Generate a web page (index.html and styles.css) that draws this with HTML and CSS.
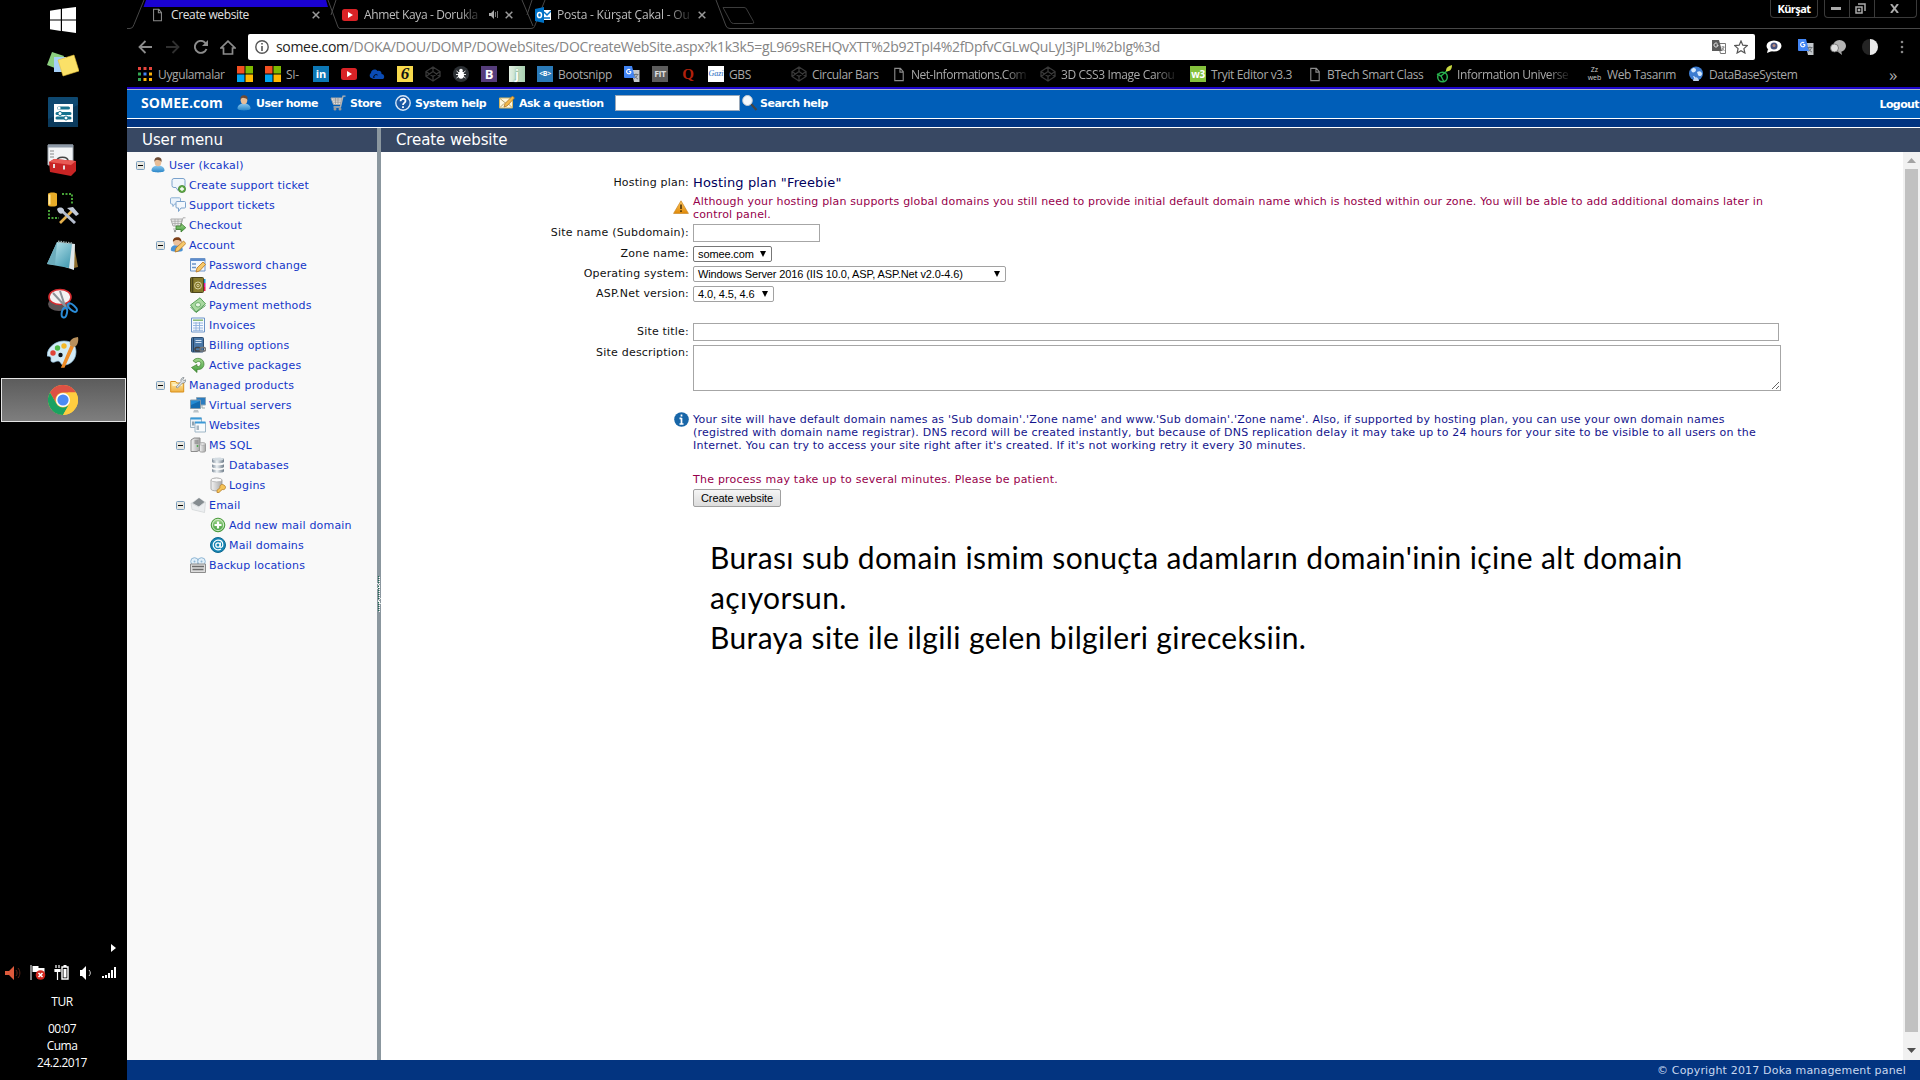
FILE: index.html
```
<!DOCTYPE html>
<html lang="tr">
<head>
<meta charset="utf-8">
<title>Create website</title>
<link rel="stylesheet" href="styles.css">
</head>
<body>
<svg class="defs" width="0" height="0">
  <defs>
    <linearGradient id="g-blue" x2="0" y2="1"><stop stop-color="#8cc8ee"/><stop offset="1" stop-color="#2a86c8"/></linearGradient>
    <linearGradient id="g-green" x2="0" y2="1"><stop stop-color="#a4d890"/><stop offset="1" stop-color="#3e9a38"/></linearGradient>
    <linearGradient id="g-grey" x2="1" y2="0"><stop stop-color="#f4f4f4"/><stop offset="1" stop-color="#a8a8a8"/></linearGradient>
    <linearGradient id="g-steel" x2="1" y2="0"><stop stop-color="#7d8b98"/><stop offset=".4" stop-color="#eef3f6"/><stop offset="1" stop-color="#6d7b88"/></linearGradient>
    <linearGradient id="g-gold" x2="0" y2="1"><stop stop-color="#fff0b0"/><stop offset="1" stop-color="#f0b040"/></linearGradient>
    <linearGradient id="g-pad" x2="1" y2="1"><stop stop-color="#c8eef4"/><stop offset="1" stop-color="#3a94ac"/></linearGradient>
    <linearGradient id="g-warn" x2="0" y2="1"><stop stop-color="#ffc860"/><stop offset="1" stop-color="#e08a08"/></linearGradient>
  </defs>
  <symbol id="page" viewBox="0 0 12 16"><path d="M1.500 1.500h6l3 3.500v9.500h-9zM7 1.500v4h3.500" fill="none" stroke="#8a8a8a" stroke-width="1.200"/></symbol>
  <symbol id="close" viewBox="0 0 8 8"><path d="M.7.700l6.600 6.600M7.300.700L.7 7.300" stroke="#9a9a9a" stroke-width="1.500"/></symbol>
  <symbol id="youtube" viewBox="0 0 16 16"><rect y="2" width="16" height="12" rx="2.500" fill="#d92226"/><path d="M6 5l5 3-5 3z" fill="#fff"/></symbol>
  <symbol id="microsoft" viewBox="0 0 16 16"><path fill="#f25022" d="M0 0h7.500v7.500H0z"/><path fill="#7fba00" d="M8.500 0H16v7.500H8.500z"/><path fill="#00a4ef" d="M0 8.500h7.500V16H0z"/><path fill="#ffb900" d="M8.500 8.500H16V16H8.500z"/></symbol>
  <symbol id="codepen" viewBox="0 0 16 16"><path d="M8 1l7 4.500v5L8 15l-7-4.500v-5zM8 1v4.500M8 15v-4.500M1 5.500l7 5 7-5M1 10.500l7-5 7 5" fill="none" stroke="#383838" stroke-width="1.300"/></symbol>
  <symbol id="translate" viewBox="0 0 16 16"><path d="M7 4h8.500v12H10z" fill="#c4c8cc"/><path d="M0 0h8l3 12H1a1 1 0 0 1-1-1z" fill="#4285f4"/><path d="M7 5.500H5.200M7 5.500a2.200 2.200 0 1 1-.8-1.600" fill="none" stroke="#fff" stroke-width="1.100"/><path d="M9.500 8.500h5M12 7.500v1M13.500 8.500c-.5 2-2 3.500-3 4M10.500 9c.5 2 2 3.500 3.500 4" fill="none" stroke="#6a7076" stroke-width=".9"/></symbol>
  <symbol id="user" viewBox="0 0 16 16"><path d="M1.500 13.500c0-3.500 3-5 6.500-5s6.500 1.500 6.500 5c0 2.500-13 2.500-13 0z" fill="url(#g-blue)"/><ellipse cx="8" cy="5.300" rx="3.300" ry="4" fill="#e8bd96"/><path d="M4.500 5C4 1.500 6 .2 8 .2s4.200 1 3.500 4.800C10.500 3 8 3 7 2.800 6 3 5 3.500 4.500 5z" fill="#6b4a34"/></symbol>
  <symbol id="cart" viewBox="0 0 16 16"><path d="M1 3h11l-1.500 6.500h-7z" fill="#dedede" stroke="#a6a6a6"/><path d="M3 5h8.500M3.500 7.200H11M5.500 3v6M8 3v6" stroke="#8e8e8e" stroke-width=".7"/><path d="M15.500 1.200H13L10.500 12H3.500" fill="none" stroke="#b4b4b4" stroke-width="1.300"/><circle cx="5" cy="14" r="1.500" fill="#9a9a9a"/><circle cx="10" cy="14" r="1.500" fill="#9a9a9a"/></symbol>
  <symbol id="help" viewBox="0 0 16 16"><circle cx="8" cy="8" r="7.200" fill="#1b59a4" stroke="#d8e8f8" stroke-width="1.400"/><path d="M5.500 6.200C5.500 3 10.600 3 10.500 6c0 1.900-2.500 1.900-2.500 4M8 11.200v1.800" fill="none" stroke="#fff" stroke-width="1.800"/></symbol>
  <symbol id="mailpen" viewBox="0 0 16 16"><path d="M.5 3h13v10H.5z" fill="#fdf6dc" stroke="#d4b660"/><path d="M1 3.500l6 5 6-5M1 12.500l4-4M13 12.500l-4-4" fill="none" stroke="#b8a468"/><path d="M5 12l1-3.500L13.500 1l2 2L8 11z" fill="#f2b94a" stroke="#a86c18" stroke-width=".7"/></symbol>
  <symbol id="lens" viewBox="0 0 16 16"><path d="M9 9l5.500 6" stroke="#454545" stroke-width="2.200"/><ellipse cx="5.500" cy="5.500" rx="4.800" ry="5" fill="#f4f8fc" stroke="#c8ccd0"/></symbol>
  <symbol id="minus" viewBox="0 0 9 9"><rect x=".5" y=".5" width="8" height="8" rx="1" fill="#e6e6e0" stroke="#7b9ebd"/><path d="M2 4.500h5" stroke="#000"/></symbol>
  <symbol id="bubbleadd" viewBox="0 0 16 16"><path d="M4 1.500h9a2 2 0 0 1 2 2v5a2 2 0 0 1-2 2H9l-1 3-2-3H4a2 2 0 0 1-2-2v-5a2 2 0 0 1 2-2z" fill="#f0f6fc" stroke="#7ba2cc"/><circle cx="12" cy="12" r="3.600" fill="#62ac48" stroke="#3c7c2c" stroke-width=".7"/><path d="M10 12h4M12 10v4" stroke="#fff" stroke-width="1.300"/></symbol>
  <symbol id="bubbles" viewBox="0 0 16 16"><path d="M1.500.8h8a1 1 0 0 1 1 1V6a1 1 0 0 1-1 1H4.500L3 9.500 2.500 7h-1a1 1 0 0 1-1-1V1.800a1 1 0 0 1 1-1z" fill="#eaf2fa" stroke="#8bafd4"/><path d="M7 4.500h7.500a1 1 0 0 1 1 1V10a1 1 0 0 1-1 1H11l-2.500 3.500V11H7a1 1 0 0 1-1-1V5.500a1 1 0 0 1 1-1z" fill="#f4f8fc" stroke="#7ba2cc"/></symbol>
  <symbol id="checkout" viewBox="0 0 16 16"><path d="M.8 2h11.500l-2 7H3z" fill="#ececec" stroke="#aaa"/><path d="M2 4.300h10M2.500 6.500h8.500M5 2v7M8 2v7" stroke="#a4a4a4" stroke-width=".7"/><path d="M15.500.8H13L10 12H3" fill="none" stroke="#b0b0b0"/><circle cx="5" cy="14" r="1.200" fill="#999"/><path d="M6 9h5V6.500l4.800 4.200L11 15v-2.500H6z" fill="url(#g-green)" stroke="#3a7c2c" stroke-width=".8"/></symbol>
  <symbol id="account" viewBox="0 0 16 16"><path d="M.8 13c0-4 3-5 6-5s6 1.500 6 5c0 2.500-12 2.500-12 0z" fill="#4b93d6"/><circle cx="7" cy="5" r="3.800" fill="#ecc09a"/><path d="M3 5C2.500 1.500 5 .2 7.500.2S12 2 11.500 6c-1-3-3-2.800-4.500-3C5.500 3 4 3.500 3 5z" fill="#7c3f18"/><path d="M5 15l1-4 7.500-7L15.800 6.500 8.500 14z" fill="#f6c868" stroke="#b87420" stroke-width=".8"/></symbol>
  <symbol id="formpen" viewBox="0 0 16 16"><path d="M.5 1.500h14.500v12.500H.5z" fill="#f2f7fd" stroke="#6c94c8"/><path d="M1 3h14" stroke="#5d8ccc" stroke-width="2"/><path d="M2 7h4M2 10.500h4" stroke="#6c94c8" stroke-width="1.500"/><path d="M6 15l1-4 6-6 2.500 2.500L9.500 14z" fill="#f6c868" stroke="#b87420" stroke-width=".8"/></symbol>
  <symbol id="addressbook" viewBox="0 0 16 16"><path d="M13 2h2.500v4H13z" fill="#1b98d8"/><path d="M13 6h2.500v4H13z" fill="#e01ca0"/><path d="M13 10h2.500v4H13z" fill="#e8184c"/><rect x=".5" y=".5" width="13" height="15" rx="1" fill="#877b2c" stroke="#4d461c"/><path d="M2.500 1v14" stroke="#4d461c" stroke-width="1.600"/><circle cx="8" cy="8.500" r="3.500" fill="none" stroke="#d8d0a0"/><circle cx="8" cy="8.500" r="1.200" fill="none" stroke="#d8d0a0"/></symbol>
  <symbol id="money" viewBox="0 0 16 16"><path d="M.5 8L10 .8l5.500 6L6 15z" fill="#a9d8a0" stroke="#59a258"/><path d="M.5 10L6 15.500 15.500 8.500" fill="none" stroke="#4c944c"/><ellipse cx="8" cy="7.800" rx="2.600" ry="2.200" fill="#e8f6e4" stroke="#59a258" stroke-width=".8"/></symbol>
  <symbol id="invoice" viewBox="0 0 16 16"><path d="M1.500 1h13v14h-13z" fill="#f6faff" stroke="#6c94c8"/><path d="M3 3.200h10" stroke="#84b874" stroke-width="1.500"/><path d="M3 6h10M3 8.500h10M3 11h10M3 13.300h10M6 5v9M9.500 5v9" stroke="#8fb0dc" stroke-width=".9"/></symbol>
  <symbol id="billing" viewBox="0 0 16 16"><rect x="1.500" y=".5" width="12" height="14.500" rx="1" fill="#4a78a8" stroke="#2c4c70"/><path d="M3.500 1v14" stroke="#264566"/><path d="M5.500 3.500h6M5.500 5.500h6" stroke="#cfe0f2" stroke-width="1.200"/><rect x="5" y="10.500" width="5.500" height="3.600" rx="1.800" fill="none" stroke="#444" stroke-width="1.500"/><rect x="10" y="10.500" width="5.500" height="3.600" rx="1.800" fill="none" stroke="#777" stroke-width="1.500"/></symbol>
  <symbol id="recycle" viewBox="0 0 16 16"><path d="M3 3.800C6-.5 14 1 14 7c0 4-3.500 6-7 5.500V15.500L1.500 10.500 7 7.500v2c2 .4 3.800-.8 3.800-2.800C10.800 4.200 7.500 3.500 6 6z" fill="url(#g-green)" stroke="#3c7c2c" stroke-width=".7"/></symbol>
  <symbol id="folder" viewBox="0 0 16 16"><path d="M.7 4.500h5l1 1.500h7v9H.7z" fill="url(#g-gold)" stroke="#d8901c"/><path d="M2.500 8h9.500" stroke="#fff8dc" stroke-width="1.500"/><path d="M6 10l5-5.500c-.6-2 .8-4.300 3-4L12.800 2.500l1 1.200 2-.9c.3 2-1.400 3.700-3.300 3.200L7.500 11z" fill="#dfe3e6" stroke="#83898e" stroke-width=".8"/></symbol>
  <symbol id="servers" viewBox="0 0 16 16"><path d="M6.500.5h9v7.500h-9z" fill="#2a7cc0" stroke="#8da6b8"/><path d="M12 8v3h3" stroke="#9aa" fill="none"/><path d="M.5 3h10v8.500H.5z" fill="#258cd4" stroke="#8398a8"/><path d="M1 8l9-4v7H1z" fill="#136bb0"/><path d="M4 13h4l1 2.500H3z" fill="#bcc4c8"/></symbol>
  <symbol id="windows" viewBox="0 0 16 16"><path d="M.5 1h11v9.500H.5z" fill="#eef4f8" stroke="#9fb6c6"/><path d="M.5 1.500h11" stroke="#3b9ad8" stroke-width="2"/><path d="M2 4.500h2.500v4H2z" fill="#90a4b2"/><path d="M5 5.500h10.500V15H5z" fill="#f8fbfd" stroke="#9fb6c6"/><path d="M5 5.500h10.500" stroke="#3b9ad8" stroke-width="2"/><path d="M6.500 8.500H9V13H6.500z" fill="#a8b8c4"/></symbol>
  <symbol id="mssql" viewBox="0 0 16 16"><path d="M1 3l3-2h6v12l-3 1.500H1z" fill="url(#g-grey)" stroke="#8c8c8c"/><path d="M4.500 4h4M4.500 6h4" stroke="#777"/><circle cx="7.500" cy="9" r=".9" fill="#48a848"/><path d="M9.500 7c0-1.500 6-1.500 6 0v7c0 1.500-6 1.500-6 0z" fill="url(#g-grey)" stroke="#8c8c8c" stroke-width=".8"/><ellipse cx="12.500" cy="7" rx="3" ry="1.100" fill="#f4f4f4" stroke="#999" stroke-width=".6"/></symbol>
  <symbol id="database" viewBox="0 0 16 16"><path d="M2 2.200c0-2 12-2 12 0v2.500c0 2-12 2-12 0zM2 7.200c2 1.500 10 1.500 12 0v2.500c0 2-12 2-12 0zM2 12c2 1.500 10 1.500 12 0v2.300c0 2-12 2-12 0z" fill="url(#g-steel)"/><ellipse cx="8" cy="2.200" rx="5.500" ry="1.400" fill="#d4dce2"/></symbol>
  <symbol id="dbkey" viewBox="0 0 16 16"><path d="M1 3c0-2.500 11-2.500 11 0v9c0 2.500-11 2.500-11 0z" fill="url(#g-grey)" stroke="#9a9a9a" stroke-width=".8"/><ellipse cx="6.500" cy="3" rx="5.500" ry="1.900" fill="#fafafa" stroke="#aaa" stroke-width=".7"/><path d="M7 15.500v-2.200l3-2.500c-.5-2 .8-3.600 2.500-3.300 2 .3 3.300 2 3 3.300-.5 1.700-2 2.200-3.300 1.700L9 15.500z" fill="#f6c458" stroke="#b8802c" stroke-width=".8"/></symbol>
  <symbol id="email" viewBox="0 0 16 16"><path d="M1 6l8-5.500L15.500 5l-1 10.500L2 12.500z" fill="#dfe2e4"/><path d="M2.500 6L9 1l5.500 4L9 9.500z" fill="#858c90"/><path d="M1 6l7.500 4L15.500 5l-1 10.500L2 12.500z" fill="#eceef0" stroke="#cfd2d4" stroke-width=".6"/></symbol>
  <symbol id="add" viewBox="0 0 16 16"><circle cx="8" cy="8" r="6.800" fill="url(#g-green)" stroke="#4a9a3c"/><circle cx="8" cy="8" r="5.600" fill="none" stroke="#d8f0d0" stroke-width=".9"/><path d="M4.500 8h7M8 4.500v7" stroke="#fff" stroke-width="2.200"/></symbol>
  <symbol id="at" viewBox="0 0 16 16"><circle cx="8" cy="8" r="7.500" fill="#1886b4" stroke="#0e6890"/><circle cx="8" cy="8" r="2.200" fill="none" stroke="#fff" stroke-width="1.300"/><path d="M10.500 5.500L10 9.500c.3 1.500 2.800 1 2.800-1.700C12.800 5 10.700 3.200 8 3.200A4.800 4.800 0 0 0 8 12.800c1.300 0 2.200-.3 3-.8" fill="none" stroke="#fff" stroke-width="1.200"/></symbol>
  <symbol id="backup" viewBox="0 0 16 16"><circle cx="4.500" cy="4.500" r="3.800" fill="#e2f0fa" stroke="#8fb6d4"/><circle cx="11.500" cy="4.500" r="3.800" fill="#e2f0fa" stroke="#8fb6d4"/><circle cx="4.500" cy="4.500" r="1" fill="#8fb6d4"/><circle cx="11.500" cy="4.500" r="1" fill="#8fb6d4"/><path d="M.5 7h15v8.500H.5z" fill="#dcdcdc" stroke="#8c8c8c"/><path d="M2 9.500h12M2.500 12.500h11" stroke="#6c6c6c" stroke-width="1.300"/></symbol>
</svg>

<div class="desktop">
  <aside class="taskbar">
    <div class="pin start"><svg width="26" height="26" viewBox="0 0 26 26"><path d="M0 3.800L10.800 2v10.500H0zM12 1.800L26 0v12.500H12zM0 13.500h10.800V24L0 22.200zM12 13.500h14V26l-14-2z" fill="#fff"/></svg></div>
    <div class="pin"><svg width="32" height="32" viewBox="0 0 32 32"><path d="M5 4l12 4-4 14L0 17z" fill="#8ccf80"/><path d="M7 9h12v15H7z" fill="#a6d0f8"/><path d="M11 12l16-5 5 16-16 5z" fill="#fbe168" stroke="#e4bf38" stroke-width=".6"/></svg></div>
    <div class="pin"><svg width="30" height="30" viewBox="0 0 30 30"><rect width="30" height="30" rx="1" fill="#0e4870"/><path d="M0 22L30 8v22H0z" fill="#0b3a5c"/><path d="M6 7h19v18H6z" fill="#fff"/><path d="M10.500 11h10M9 16.500h13M9 21h13" stroke="#17728e" stroke-width="3" stroke-linecap="round"/><circle cx="11" cy="11" r="1.600" fill="#fff"/><circle cx="12" cy="16.500" r="2" fill="#fff" stroke="#17728e"/><circle cx="18" cy="21" r="2" fill="#fff" stroke="#17728e"/></svg></div>
    <div class="pin"><svg width="32" height="32" viewBox="0 0 32 32"><path d="M1 1h25v20H1z" fill="#f2f4f6" stroke="#a0a8b0"/><path d="M1 2h25" stroke="#8c98a6" stroke-width="3"/><path d="M3 7h4M3 10h4M3 13h4" stroke="#888"/><path d="M10 17c0-5 11-5 11 0" fill="none" stroke="#444" stroke-width="1.600"/><path d="M2 18l5-3 22 2v10l-5 5L3 28z" fill="#c82424"/><path d="M2 18l5-3 22 2-5 4z" fill="#e85a54"/><path d="M7 20v4M17 21.500v4" stroke="#e8e0e0" stroke-width="2"/></svg></div>
    <div class="pin"><svg width="32" height="32" viewBox="0 0 32 32"><path d="M1 2c0-2 9-2 9 0v11c0 2-9 2-9 0z" fill="#e8ac28"/><path d="M2.500 2.500v10" stroke="#ffe9a0" stroke-width="2"/><path d="M15 2h10v10M2 18v8h10" fill="none" stroke="#48a438" stroke-width="2" stroke-dasharray="2 1.500"/><path d="M13 31l13-13" stroke="#e4b04c" stroke-width="2.600"/><path d="M14 18l14 13" stroke="#b4bccc" stroke-width="3"/><path d="M10 17c3-3 8-1 7 3-2 3-6 2-7-3zM20 16l6-1 6 7-3 2-4-4z" fill="#c2cad8"/></svg></div>
    <div class="pin"><svg width="32" height="32" viewBox="0 0 32 32"><path d="M27 5l4 22-4 1z" fill="#8c6c2c"/><path d="M12 2l16 2-1 26-9-3z" fill="#dfe7ea"/><path d="M10 2l15 2-3 24L0 24z" fill="url(#g-pad)"/><path d="M10 2L0 24l8 1z" fill="#6cacbc"/><path d="M11 1.500l15 2" stroke="#9aa" stroke-width="2" stroke-dasharray="1.500 1"/></svg></div>
    <div class="pin"><svg width="32" height="32" viewBox="0 0 32 32"><ellipse cx="12" cy="16" rx="11" ry="7" fill="#5c5456"/><ellipse cx="13" cy="9" rx="11" ry="7.500" fill="#f4f2f2" stroke="#d62c30" stroke-width="1.600"/><path d="M6 5l13 14M13 3l5 15" stroke="#8c9298" stroke-width="2"/><ellipse cx="17.500" cy="24.500" rx="2.600" ry="5" fill="none" stroke="#2a8cd8" stroke-width="2" transform="rotate(12 17 24)"/><ellipse cx="25.500" cy="20" rx="2.600" ry="5.500" fill="none" stroke="#2a8cd8" stroke-width="2" transform="rotate(-48 25 20)"/></svg></div>
    <div class="pin"><svg width="32" height="32" viewBox="0 0 32 32"><path d="M0 20C0 11 9 5 17 5s12 4 12 11-5 13-12 13c-4 0-3-4-6-4s-3 2-6 1 2-6-5-6z" fill="#d2eaf6" stroke="#8cbcd8" stroke-width=".7"/><circle cx="6" cy="17" r="2.700" fill="#e04438"/><circle cx="10.500" cy="12" r="2.700" fill="#4cb848"/><circle cx="17" cy="10" r="2.700" fill="#f4b828"/><circle cx="13.500" cy="19" r="2.200" fill="#0a1018"/><path d="M15 31l9-21 2 1-9 20z" fill="#ee8c28" stroke="#ee8c28" stroke-width="1.500"/><path d="M23 9c-1-4 1-7 8-8 1 5-1 10-5 10z" fill="#b8905c"/></svg></div>
    <div class="pin active"><svg width="30" height="30" viewBox="0 0 30 30"><circle cx="15" cy="15" r="15" fill="#ffcd40"/><path d="M2 7.500A15 15 0 0 1 28 7.500H15a7.500 7.500 0 0 0-6.500 11.300z" fill="#dd5144"/><path d="M2 7.500L8.500 18.800A7.500 7.500 0 0 0 21.500 18.800L15 30A15 15 0 0 1 2 7.500z" fill="#1ba261"/><path d="M21.500 18.800A7.500 7.500 0 0 0 21 10.500l-1-3h8A15 15 0 0 1 15 30z" fill="#ffcd40"/><circle cx="15" cy="15" r="7" fill="#fff"/><circle cx="15" cy="15" r="5.600" fill="#4c8bf5"/></svg></div>
    <div class="tray">
      <svg class="more" width="5" height="8" viewBox="0 0 5 8"><path d="M0 0l5 4-5 4z" fill="#fff"/></svg>
      <div class="tray-icons">
        <svg width="16" height="14" viewBox="0 0 16 14"><path d="M0 5h4l5-5v14L4 9H0z" fill="#dc5a3c"/><path d="M11 4c1.500 2 1.500 4 0 6M13 2c2.500 3 2.500 7 0 10" fill="none" stroke="#5c2416"/></svg>
        <svg width="16" height="15" viewBox="0 0 16 15"><path d="M1 0v15" stroke="#fff"/><path d="M2.500 1h6v2h6v6h-6V7h-6z" fill="#fff"/><circle cx="10.500" cy="10" r="4.800" fill="#d42a20"/><path d="M8.500 8l4 4M12.500 8l-4 4" stroke="#fff" stroke-width="1.600"/></svg>
        <svg width="15" height="15" viewBox="0 0 15 15"><path d="M2 0v3M5 0v3M1 4.500h5v2H1zM3.500 6v9" stroke="#fff" fill="#fff" stroke-width="1.200"/><path d="M8 2h6v12H8zM9.500.700h3" fill="none" stroke="#fff" stroke-width="1.400"/><path d="M9.500 4h3v8.500h-3z" fill="#fff"/></svg>
        <svg width="13" height="14" viewBox="0 0 13 14"><path d="M0 4h2v6H0zM2 4l4-4v14l-4-4z" fill="#fff"/><path d="M9 4c1.800 2 1.800 4 0 6" fill="none" stroke="#ccc"/></svg>
        <svg width="14" height="11" viewBox="0 0 14 11"><path d="M0 9h2v2H0zM3 8h2v3H3zM6 6h2v5H6zM9 3h2v8H9zM12 0h2v11h-2z" fill="#fff"/></svg>
      </div>
      <div class="lang">TUR</div>
      <div class="clock"><span>00:07</span><span>Cuma</span><span>24.2.2017</span></div>
    </div>
  </aside>

  <div class="browser">
    <div class="tabstrip">
      <svg class="tab-outline" width="1793" height="29" viewBox="0 0 1793 29">
        <path d="M19 0h180l2 7H16.500z" fill="#1a02d2"/>
        <path d="M0 28.500h3q3 0 4-4L17 0M201 0l10 27q.7 1.500 2 1.500h191q3 0 3.500-2L418 0M395 0l11 26M589 0l10 26q1 2.500 4 2.500H1793M204 15l5-15M400 15l5-15" fill="none" stroke="#474747"/>
        <path d="M596 7.500h21q2 0 2.500 1.500l7 12.500q1 2-1 2h-19q-2 0-3-2z" fill="none" stroke="#3c3c3c"/>
      </svg>
      <div class="tab tab-1"><svg width="11" height="14"><use href="#page"/></svg><span>Create website</span><svg width="8" height="8"><use href="#close"/></svg></div>
      <div class="tab tab-2"><svg width="16" height="16"><use href="#youtube"/></svg><span>Ahmet Kaya - Dorukla</span><svg class="sound" width="10" height="9" viewBox="0 0 10 9"><path d="M0 3h2l3-3v9L2 6H0z" fill="#aaa"/><path d="M6.500 2v5M8.500 1v7" stroke="#777"/></svg><svg width="8" height="8"><use href="#close"/></svg></div>
      <div class="tab tab-3"><svg width="16" height="16" viewBox="0 0 16 16"><path d="M8 3h8v10H8z" fill="#fff"/><path d="M9 5l3 3 4-4M9 11h6" stroke="#0072c6" fill="none" stroke-width="1.500"/><path d="M0 2l9-2v16l-9-2z" fill="#0072c6"/><ellipse cx="4.500" cy="8" rx="2" ry="2.600" fill="none" stroke="#fff" stroke-width="1.500"/></svg><span>Posta - Kürşat Çakal - Ou</span><svg width="8" height="8"><use href="#close"/></svg></div>
      <div class="profile">Kürşat</div>
      <div class="winctl">
        <i><svg width="10" height="3"><path fill="#aaa" d="M0 0h10v3H0z"/></svg></i>
        <i><svg width="11" height="11" viewBox="0 0 11 11"><path d="M3 1h7v7M1 4h6v6H1zM3.500 6.500h1v1h-1z" fill="none" stroke="#aaa" stroke-width="1.500"/></svg></i>
        <i class="wide"><svg width="9" height="9" viewBox="0 0 9 9"><path d="M1 0l7 9M8 0L1 9" stroke="#aaa" stroke-width="2"/></svg></i>
      </div>
    </div>

    <div class="toolbar">
      <svg width="14" height="14" viewBox="0 0 14 14"><path d="M14 7H2M7.500 1L1.500 7l6 6" fill="none" stroke="#8c8c8c" stroke-width="1.800"/></svg>
      <svg width="14" height="14" viewBox="0 0 14 14"><path d="M0 7h12M6.500 1l6 6-6 6" fill="none" stroke="#303030" stroke-width="1.800"/></svg>
      <svg width="14" height="14" viewBox="0 0 14 14"><path d="M12.500 9A6 6 0 1 1 11.300 2.800L12.500 4" fill="none" stroke="#8c8c8c" stroke-width="1.900"/><path d="M14 0v6H8z" fill="#8c8c8c"/></svg>
      <svg width="16" height="15" viewBox="0 0 16 15"><path d="M8 1.200L1 8h2.500v6h9V8H15z" fill="none" stroke="#8c8c8c" stroke-width="1.700"/></svg>
      <div class="omnibox">
        <svg width="14" height="14" viewBox="0 0 14 14"><circle cx="7" cy="7" r="6.200" fill="none" stroke="#555" stroke-width="1.400"/><path d="M7 3v1.600M7 6v5" stroke="#555" stroke-width="1.600"/></svg>
        <span class="url"><b>somee.com</b>/DOKA/DOU/DOMP/DOWebSites/DOCreateWebSite.aspx?k1k3k5=gL969sREHQvXTT%2b92TpI4%2fDpfvCGLwQuLyJ3jPLI%2bIg%3d</span>
        <svg width="14" height="14" viewBox="0 0 14 14"><path d="M6 3.500h7.500v10H8.500z" fill="#fff" stroke="#777"/><path d="M0 0h7l3 11H0z" fill="#5a5a5a"/><path d="M6 5H4.500M6 5a2 2 0 1 1-.6-1.400" fill="none" stroke="#fff" stroke-width=".9"/><path d="M9.500 7h3M11 6v1M12 7l-2 4M10 8l2.500 3" stroke="#777" fill="none" stroke-width=".8"/></svg>
        <svg width="14" height="14" viewBox="0 0 14 14"><path d="M7 1l1.800 4.200 4.400.4-3.300 3 1 4.400L7 10.700 3.100 13l1-4.400-3.300-3 4.400-.4z" fill="none" stroke="#555" stroke-width="1.200"/></svg>
      </div>
      <div class="extensions">
        <svg width="16" height="16" viewBox="0 0 16 16"><ellipse cx="8" cy="7" rx="7.500" ry="5.500" fill="#fff"/><path d="M2 10l-1 4 5-2z" fill="#fff"/><circle cx="8" cy="7" r="3.500" fill="#44507c"/><circle cx="8" cy="6.500" r="1.500" fill="#b8887c"/></svg>
        <svg width="16" height="16"><use href="#translate"/></svg>
        <svg width="16" height="16" viewBox="0 0 16 16"><ellipse cx="9.500" cy="7" rx="6.500" ry="6" fill="#b4b4b4"/><path d="M8 13l3-2 1 5z" fill="#a4a4a4"/><circle cx="4.500" cy="9" r="4" fill="#dedede" stroke="#666" stroke-width=".8"/></svg>
        <svg width="16" height="16" viewBox="0 0 16 16"><path d="M8 0a8 8 0 0 1 0 16z" fill="#eaeaea"/><path d="M8 0a8 8 0 0 0 0 16z" fill="#242424"/></svg>
      </div>
      <svg class="dots" width="4" height="14" viewBox="0 0 4 14"><circle cx="2" cy="2" r="1.300" fill="#888"/><circle cx="2" cy="7" r="1.300" fill="#888"/><circle cx="2" cy="12" r="1.300" fill="#888"/></svg>
    </div>

    <div class="bookmarks">
      <a><svg width="14" height="14" viewBox="0 0 14 14"><path d="M0 0h3v3H0zM5.500 0h3v3h-3zM11 0h3v3h-3z" fill="#e8453c"/><path d="M0 5.500h3v3H0z" fill="#34a853"/><path d="M5.500 5.500h3v3h-3z" fill="#4285f4"/><path d="M11 5.500h3v3h-3zM5.500 11h3v3h-3zM11 11h3v3h-3z" fill="#fbb30b"/><path d="M0 11h3v3H0z" fill="#34a853"/></svg><span>Uygulamalar</span></a>
      <a><svg width="16" height="16"><use href="#microsoft"/></svg></a>
      <a><svg width="16" height="16"><use href="#microsoft"/></svg><span>SI-</span></a>
      <a><i class="fav linkedin">in</i></a>
      <a><svg width="16" height="16"><use href="#youtube"/></svg></a>
      <a><svg width="16" height="16" viewBox="0 0 16 16"><path d="M2 12a3 3 0 0 1 0-5C2 4 6 2 8.500 5 11 4 13 6 12.500 8 16 8 16 13 13 13H6c-1.500 0-3-.5-4-1z" fill="#0a4bb4"/><path d="M5 12c-1-3 2-4 3.500-3" fill="none" stroke="#000"/></svg></a>
      <a><i class="fav six">6</i></a>
      <a><svg width="16" height="16"><use href="#codepen"/></svg></a>
      <a><svg width="16" height="16" viewBox="0 0 16 16"><circle cx="8" cy="8" r="8" fill="#2c3034"/><ellipse cx="8" cy="9" rx="3" ry="3.800" fill="#fff"/><circle cx="8" cy="4.500" r="1.800" fill="#fff"/><path d="M3.500 5l9 7M12.500 5l-9 7M3 8.500h10" stroke="#fff" stroke-width=".9"/></svg></a>
      <a><i class="fav boot">B</i></a>
      <a><i class="fav jay">j</i></a>
      <a><i class="fav snipp">&lt;B&gt;</i><span>Bootsnipp</span></a>
      <a><svg width="16" height="16"><use href="#translate"/></svg></a>
      <a><i class="fav fit">FIT</i></a>
      <a><i class="fav quora">Q</i></a>
      <a><i class="fav gazi">Gazi</i><span>GBS</span></a>
      <a><svg width="16" height="16"><use href="#codepen"/></svg><span>Circular Bars</span></a>
      <a><svg width="12" height="15"><use href="#page"/></svg><span class="fade tight">Net-Informations.Com</span></a>
      <a><svg width="16" height="16"><use href="#codepen"/></svg><span class="fade">3D CSS3 Image Carou</span></a>
      <a><i class="fav w3">w3</i><span>Tryit Editor v3.3</span></a>
      <a><svg width="12" height="15"><use href="#page"/></svg><span>BTech Smart Class</span></a>
      <a><svg width="16" height="18" viewBox="0 0 16 18"><circle cx="6.500" cy="12" r="4.800" fill="none" stroke="#28b04c" stroke-width="1.500"/><path d="M1 9l4 2 3 6M5 11l7-6" stroke="#28b04c" fill="none" stroke-width="1.400"/><path d="M10 6c0-4 3-5 6-6 0 4-2 7-6 6z" fill="#c8d840"/></svg><span class="fade">Information Universe</span></a>
      <a><i class="fav zz"><span>Zz</span><span>web</span></i><span>Web Tasarım</span></a>
      <a><svg width="16" height="16" viewBox="0 0 16 16"><circle cx="8" cy="7.500" r="7" fill="#3c7cd0"/><path d="M3 4c2-3 5-2 5 0s-3 3-4 2zM9 6c3-2 5 0 5 2s-3 3-4 1zM5 10c2 0 3 2 2 4" fill="#d4e8fc"/><path d="M5 15c1-5 5-5 6 0z" fill="#bcd4f0"/></svg><span>DataBaseSystem</span></a>
      <a><span class="chev">»</span></a>
    </div>

    <main class="site">
      <header class="topbar">
        <a class="brand">SOMEE.com</a>
        <a class="t-home"><svg width="16" height="16"><use href="#user"/></svg>User home</a>
        <a class="t-store"><svg width="16" height="16"><use href="#cart"/></svg>Store</a>
        <a class="t-help"><svg width="16" height="16"><use href="#help"/></svg>System help</a>
        <a class="t-ask"><svg width="16" height="16"><use href="#mailpen"/></svg>Ask a question</a>
        <input class="search" type="text">
        <a class="t-search"><svg width="16" height="16"><use href="#lens"/></svg>Search help</a>
        <a class="logout">Logout</a>
      </header>
      <div class="band"></div>
      <div class="columns">
        <nav class="side">
          <h2>User menu</h2>
          <ul class="tree">
            <li class="l1"><svg class="tg"><use href="#minus"/></svg><svg class="ic"><use href="#user"/></svg><a>User (kcakal)</a></li>
            <li class="l2"><svg class="ic"><use href="#bubbleadd"/></svg><a>Create support ticket</a></li>
            <li class="l2"><svg class="ic"><use href="#bubbles"/></svg><a>Support tickets</a></li>
            <li class="l2"><svg class="ic"><use href="#checkout"/></svg><a>Checkout</a></li>
            <li class="l2"><svg class="tg"><use href="#minus"/></svg><svg class="ic"><use href="#account"/></svg><a>Account</a></li>
            <li class="l3"><svg class="ic"><use href="#formpen"/></svg><a>Password change</a></li>
            <li class="l3"><svg class="ic"><use href="#addressbook"/></svg><a>Addresses</a></li>
            <li class="l3"><svg class="ic"><use href="#money"/></svg><a>Payment methods</a></li>
            <li class="l3"><svg class="ic"><use href="#invoice"/></svg><a>Invoices</a></li>
            <li class="l3"><svg class="ic"><use href="#billing"/></svg><a>Billing options</a></li>
            <li class="l3"><svg class="ic"><use href="#recycle"/></svg><a>Active packages</a></li>
            <li class="l2"><svg class="tg"><use href="#minus"/></svg><svg class="ic"><use href="#folder"/></svg><a>Managed products</a></li>
            <li class="l3"><svg class="ic"><use href="#servers"/></svg><a>Virtual servers</a></li>
            <li class="l3"><svg class="ic"><use href="#windows"/></svg><a>Websites</a></li>
            <li class="l3"><svg class="tg"><use href="#minus"/></svg><svg class="ic"><use href="#mssql"/></svg><a>MS SQL</a></li>
            <li class="l4"><svg class="ic"><use href="#database"/></svg><a>Databases</a></li>
            <li class="l4"><svg class="ic"><use href="#dbkey"/></svg><a>Logins</a></li>
            <li class="l3"><svg class="tg"><use href="#minus"/></svg><svg class="ic"><use href="#email"/></svg><a>Email</a></li>
            <li class="l4"><svg class="ic"><use href="#add"/></svg><a>Add new mail domain</a></li>
            <li class="l4"><svg class="ic"><use href="#at"/></svg><a>Mail domains</a></li>
            <li class="l3"><svg class="ic"><use href="#backup"/></svg><a>Backup locations</a></li>
          </ul>
        </nav>
        <div class="splitter"><svg width="4" height="36" viewBox="0 0 4 36"><path d="M1.500 0v36" stroke="#1c6b50" stroke-width="1" stroke-dasharray="1 1"/><path d="M2.500 1v36" stroke="#fff" stroke-width="1" stroke-dasharray="1 1"/><path d="M0 7l3 3-3 3M4 22l-3 3 3 3" fill="none" stroke="#e8efec"/></svg></div>
        <section class="content">
          <h2>Create website</h2>
          <div class="pane">
            <form class="form">
              <label>Hosting plan:</label><div class="plan">Hosting plan "Freebie"</div>
              <svg class="note-icon warn" width="16" height="14" viewBox="0 0 16 14"><path d="M8 .8L15.400 13.400H.6z" fill="url(#g-warn)" stroke="#c88420" stroke-width=".7"/><path d="M8 4.500v4.500M8 10.300v1.800" stroke="#4c3408" stroke-width="1.600"/></svg>
              <p class="warning">Although your hosting plan supports global domains you still need to provide initial default domain name which is hosted within our zone. You will be able to add additional domains later in<br>control panel.</p>
              <label class="r-name">Site name (Subdomain):</label><input class="r-name sub" type="text">
              <label class="r-sel">Zone name:</label><div class="r-sel select zone"><span>somee.com</span><i></i></div>
              <label class="r-sel">Operating system:</label><div class="r-sel select os"><span>Windows Server 2016 (IIS 10.0, ASP, ASP.Net v2.0-4.6)</span><i></i></div>
              <label class="r-sel">ASP.Net version:</label><div class="r-sel select net"><span>4.0, 4.5, 4.6</span><i></i></div>
              <label class="r-title">Site title:</label><input class="r-title titlebox" type="text">
              <label class="r-desc">Site description:</label><textarea class="r-desc"></textarea>
              <svg class="note-icon info" width="15" height="15" viewBox="0 0 15 15"><circle cx="7.500" cy="7.500" r="7.300" fill="#1866a8"/><path d="M7.500 2.500v2M7.500 6v6M5.500 6.300h2M5.500 12h4" stroke="#fff" stroke-width="1.700"/></svg>
              <p class="infotext">Your site will have default domain names as 'Sub domain'.'Zone name' and www.'Sub domain'.'Zone name'. Also, if supported by hosting plan, you can use your own domain names<br>(registred with domain name registrar). DNS record will be created instantly, but because of DNS replication delay it may take up to 24 hours for your site to be visible to all users on the<br>Internet. You can try to access your site right after it's created. If it's not working retry it every 30 minutes.</p>
              <p class="patience">The process may take up to several minutes. Please be patient.</p>
              <button class="create" type="button">Create website</button>
              <p class="memo">Burası sub domain ismim sonuçta adamların domain'inin içine alt domain<br>açıyorsun.<br>Buraya site ile ilgili gelen bilgileri gireceksiin.</p>
            </form>
            <div class="scroll"><svg width="9" height="5"><path d="M0 5l4.500-5L9 5z" fill="#a3a3a3"/></svg><div class="thumb"></div><svg width="9" height="5"><path d="M0 0h9L4.500 5z" fill="#505050"/></svg></div>
          </div>
        </section>
      </div>
      <footer>© Copyright 2017 Doka management panel</footer>
    </main>
  </div>
</div>
</body>
</html>
```
FILE: styles.css
```
* { box-sizing: border-box; }
body { margin: 0; background: #000; font: 11px/13px "DejaVu Sans", Verdana, sans-serif; overflow: hidden; }
h2, p, ul { margin: 0; padding: 0; font-weight: normal; }
i { font-style: normal; }
svg { display: block; flex: none; }
.defs { position: absolute; }

.desktop { display: flex; width: 1920px; height: 1080px; }

/* taskbar */
.taskbar { width: 127px; height: 1080px; display: flex; flex-direction: column; background: #000; color: #fff; }
.pin { height: 48px; flex: none; display: flex; align-items: center; justify-content: center; padding-right: 1px; }
.pin.start { height: 40px; }
.pin.active { width: 125px; height: 44px; margin: 2px 0 0 1px; border: 1px solid #e4e4e4; background: linear-gradient(#5c5c5c, #7e7e7e); }
.tray { margin-top: auto; height: 136px; display: flex; flex-direction: column; font: 12px/17px "Open Sans", sans-serif; letter-spacing: -.5px; text-align: center; }
.more { margin-left: 111px; }
.tray-icons { display: flex; align-items: center; gap: 9px; padding-left: 5px; margin-top: 13px; height: 15px; }
.tray-icons svg:nth-child(3) { margin-left: -1px; }
.tray-icons svg:nth-child(4) { margin-left: 2px; }
.tray-icons svg:nth-child(5) { margin-left: 0; }
.lang { margin: 13px 3px 0 0; }
.clock { display: flex; flex-direction: column; margin: 10px 3px 0 0; }

/* browser chrome */
.browser { flex: 1; display: flex; flex-direction: column; min-width: 0; font-family: "Open Sans", sans-serif; }
.tabstrip { position: relative; height: 29px; display: flex; font-size: 12px; line-height: 17px; letter-spacing: -.37px; color: #bdbdbd; }
.tab-outline { position: absolute; left: 0; top: 0; }
.tab { position: relative; display: flex; align-items: center; height: 29px; flex: none; }
.tab span { white-space: nowrap; flex: 1; }
.tab svg + span { margin-left: 6px; }
.tab-1 { width: 168px; margin-left: 25px; color: #e0e0e0; }
.tab-1 svg + span { margin-left: 8px; }
.tab-2 { width: 171px; margin-left: 22px; }
.tab-2 span { max-width: 117px; }
.tab-2 .sound { margin: 0 6px 0 9px; }
.tab-3 { width: 171px; margin-left: 22px; }
.tab-3 span { letter-spacing: -.2px; max-width: 134px; margin-right: 7px; }
.tab-2 span, .tab-3 span, .fade { -webkit-mask-image: linear-gradient(90deg, #000 82%, rgba(0,0,0,.15)); mask-image: linear-gradient(90deg, #000 82%, rgba(0,0,0,.15)); }
.profile { margin-left: auto; width: 48px; height: 18px; border: 1px solid #3a3a3a; border-top: 0; border-radius: 0 0 4px 4px; color: #fff; font: bold 11px/17px "Open Sans", sans-serif; letter-spacing: -.55px; text-align: center; }
.winctl { display: flex; margin: 0 3px 0 6px; width: 93px; height: 18px; border: 1px solid #3a3a3a; border-top: 0; border-radius: 0 0 4px 4px; }
.winctl i { width: 25px; padding: 0 3px 1px 0; display: flex; align-items: center; justify-content: center; border-right: 1px solid #3a3a3a; }
.winctl .wide { flex: 1; border: 0; }

.toolbar { height: 36px; display: flex; align-items: center; padding: 0 0 0 11px; }
.toolbar > svg { margin-right: 14px; }
.toolbar > svg:nth-child(3) { margin-right: 12px; }
.toolbar > svg:nth-child(4) { margin-right: 12px; }
.omnibox { width: 1507px; height: 26px; background: #fff; border-radius: 2px; display: flex; align-items: center; padding: 0 7px 0 7px; gap: 8px; }
.url { flex: 1; font-size: 14px; line-height: 20px; letter-spacing: -.315px; color: #858585; white-space: nowrap; margin-left: -1px; }
.url b { font-weight: normal; color: #222; }
.extensions { display: flex; gap: 16px; margin-left: 11px; }
.toolbar > .dots { margin: 0 0 0 22px; }

.bookmarks { height: 22px; margin: -2px 0 1px; display: grid; align-items: center; padding-left: 11px;
  grid-template-columns: 99px 28px 48px 28px 28px 28px 28px 28px 28px 28px 28px 87px 28px 30px 26px 83px 102px 147px 150px 119px 127px 151px 101px 201px 20px; }
.bookmarks a { display: flex; align-items: center; gap: 5px; height: 22px; white-space: nowrap; color: #a9a9a9; font-size: 12px; line-height: 17px; letter-spacing: -.37px; }
.bookmarks a:nth-child(1) { gap: 6px; }
.bookmarks a:nth-child(18), .bookmarks a:nth-child(21) { gap: 6px; }
.bookmarks .tight { letter-spacing: -.5px; }
.chev { font-size: 17px; }
.fav { width: 16px; height: 16px; display: flex; align-items: center; justify-content: center; color: #fff; letter-spacing: 0; font: bold 11px/16px "Open Sans", sans-serif; }
.linkedin { background: #0c77b5; }
.six { background: #f8da4c; color: #111; font: italic bold 17px/16px "Liberation Serif", serif; }
.boot { background: #563d7c; font-size: 13px; }
.jay { background: linear-gradient(90deg, #e4f0e4, #a8d0b0); color: #fff; font-size: 13px; text-shadow: 0 0 2px #4a8a60; }
.snipp { background: #2a7ab8; font-size: 7px; letter-spacing: -.4px; }
.fit { background: #5c5c5c; color: #ddd; font-size: 9px; letter-spacing: -.5px; }
.quora { width: 12px; color: #b1200c; font: bold 15px/16px "Liberation Serif", serif; }
.gazi { background: #fff; color: #2868c0; font: italic 8px/16px "Liberation Serif", serif; }
.w3 { background: #84c13c; font-size: 10px; letter-spacing: -.5px; }
.zz { flex-direction: column; font: 7px/8px "Open Sans", sans-serif; color: #ccc; width: 15px; }

/* SOMEE page */
.site { flex: 1; display: flex; flex-direction: column; min-height: 0; border-top: 2px solid #1c04cc; font-family: "DejaVu Sans", Verdana, sans-serif; background: #fff; margin-top: 1px; }
.topbar { height: 29px; flex: none; background: #005eb8; border-top: 1px solid #a9b4cc; display: flex; align-items: center; color: #fff; font-weight: bold; font-size: 11px; letter-spacing: -.5px; padding: 0 1px 2px 14px; }
.topbar a { display: flex; align-items: center; white-space: nowrap; flex: none; }
.brand { width: 95px; font: bold 14px/20px "Open Sans", sans-serif; letter-spacing: .05px; }
.t-home { width: 94px; gap: 4px; }
.t-store { width: 65px; gap: 4px; }
.t-help { width: 104px; gap: 4px; }
.t-ask { width: 116px; gap: 4px; }
.search { width: 125px; height: 16px; border: 1px solid #9aa8b8; border-radius: 0; background: #fff; padding: 0; }
.t-search { gap: 2px; margin-left: 2px; }
.topbar .logout { margin-left: auto; letter-spacing: -.6px; padding-top: 2px; }
.band { height: 10px; flex: none; background: #003380; border-top: 1px solid #fff; border-bottom: 1px solid #fff; }
.columns { flex: 1; display: flex; min-height: 0; }
h2 { height: 24px; line-height: 25px; background: #384863; color: #fff; font-size: 15px; letter-spacing: -.1px; padding-left: 15px; }
.side { width: 250px; background: #f9f9f9; }
.tree { list-style: none; padding-top: 3px; }
.tree li { height: 20px; display: flex; align-items: center; color: #1437c8; letter-spacing: .18px; white-space: nowrap; }
.tree .ic { width: 16px; height: 16px; margin-right: 3px; }
.tree .tg { width: 9px; height: 9px; margin: 0 5px 0 -14px; }
.tree .l1 { padding-left: 23px; }
.tree .l2 { padding-left: 43px; }
.tree .l3 { padding-left: 63px; }
.tree .l4 { padding-left: 83px; }
.splitter { width: 4px; background: #8b979f; padding-top: 448px; }
.content { flex: 1; display: flex; flex-direction: column; min-width: 0; }
.pane { flex: 1; display: flex; }

.form { flex: 1; display: grid; grid-template-columns: 308px 1fr; column-gap: 4px; align-content: start; align-items: start; padding-top: 23px; color: #111; letter-spacing: .165px; white-space: nowrap; }
.form label { text-align: right; line-height: 16px; letter-spacing: .2px; }
.plan { font-size: 13px; line-height: 16px; letter-spacing: .14px; color: #00005c; height: 20px; }
.form p, .form button { grid-column: 2; }
.form .note-icon { grid-column: 1; justify-self: end; }
.form .warn { margin-top: 5px; }
.warning { color: #96004b; height: 29px; }
.form input, .form textarea { border: 1px solid #a6a6a6; background: #fff; border-radius: 0; padding: 0; margin: 0; display: block; }
.form input.sub { width: 127px; height: 18px; margin-bottom: 4px; }
.form input.titlebox { width: 1086px; height: 18px; margin-top: 17px; }
.form label.r-title { margin-top: 18px; }
.form label.r-name { margin-top: 1px; }
.select { height: 16px; margin-bottom: 4px; border: 1px solid #a2a2a2; border-radius: 2px; display: flex; align-items: center; justify-content: space-between; padding: 0 5px 0 4px; font: 11px/14px "Liberation Sans", Arial, sans-serif; letter-spacing: -.12px; color: #000; }
.select i { border: 3.5px solid transparent; border-top: 6px solid #000; border-bottom: 0; }
.zone { width: 79px; border-color: #777; }
.os { width: 313px; }
.net { width: 81px; }
.form textarea { width: 1088px; height: 46px; margin-top: 4px; resize: both; }
.form label.r-desc { margin-top: 4px; }
.form .info { margin-top: 21px; }
.infotext { color: #14148c; margin-top: 22px; letter-spacing: .21px; }
.patience { color: #96004b; margin-top: 21px; letter-spacing: .23px; }
.create { width: 88px; height: 18px; margin-top: 3px; padding: 0; border: 1px solid #a0a0a0; border-radius: 2px; background: linear-gradient(#f5f5f5, #dcdcdc); font: 11px/14px "Liberation Sans", Arial, sans-serif; letter-spacing: -.1px; color: #000; }
.memo { margin: 30px 0 0 17px; font: 30px/40px Lato, sans-serif; letter-spacing: .39px; color: #000; }

.scroll { width: 17px; background: #f1f1f1; display: flex; flex-direction: column; align-items: center; padding: 6px 0 7px; }
.thumb { width: 13px; flex: 1; background: #c1c1c1; margin: 6px 0 16px; }

footer { height: 20px; flex: none; background: #033480; color: #c8d8f0; text-align: right; line-height: 21px; letter-spacing: .17px; padding-right: 14px; }
```
